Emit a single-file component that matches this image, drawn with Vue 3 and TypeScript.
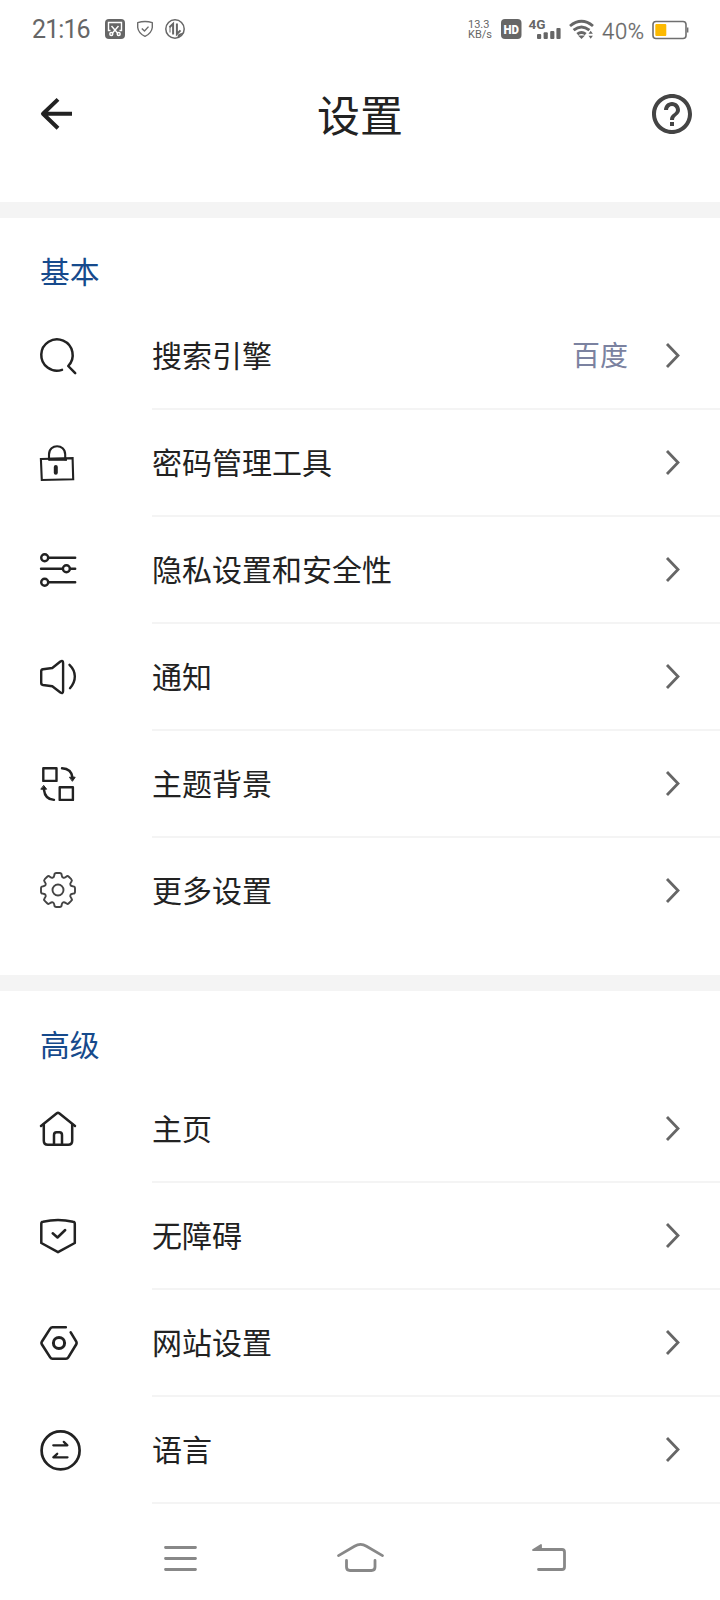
<script setup lang="ts">
type IconName =
  | 'search' | 'lock' | 'sliders' | 'speaker' | 'theme'
  | 'gear' | 'home' | 'shield' | 'hexagon' | 'language'

interface Item {
  icon: IconName
  label: string
  value?: string
}

interface Section {
  title: string
  items: Item[]
}

const sections: Section[] = [
  {
    title: '基本',
    items: [
      { icon: 'search', label: '搜索引擎', value: '百度' },
      { icon: 'lock', label: '密码管理工具' },
      { icon: 'sliders', label: '隐私设置和安全性' },
      { icon: 'speaker', label: '通知' },
      { icon: 'theme', label: '主题背景' },
      { icon: 'gear', label: '更多设置' },
    ],
  },
  {
    title: '高级',
    items: [
      { icon: 'home', label: '主页' },
      { icon: 'shield', label: '无障碍' },
      { icon: 'hexagon', label: '网站设置' },
      { icon: 'language', label: '语言' },
    ],
  },
]

// Outline of an eight-toothed gear around (cx, cy), with softened corners
function gearOutline(cx: number, cy: number): string {
  const profile: [number, number][] = [
    [-3.9, 12.9], [-3.5, 17], [3.5, 17], [3.9, 12.9],
  ]
  const points: [number, number][] = []
  for (let tooth = 0; tooth < 8; tooth++) {
    const a = (tooth * Math.PI) / 4
    for (const [u, r] of profile) {
      points.push([
        cx + u * Math.cos(a) + r * Math.sin(a),
        cy + u * Math.sin(a) - r * Math.cos(a),
      ])
    }
  }
  const toward = (from: [number, number], to: [number, number], distance: number) => {
    const length = Math.hypot(to[0] - from[0], to[1] - from[1])
    const t = Math.min(0.5, distance / length)
    return `${(from[0] + (to[0] - from[0]) * t).toFixed(2)} ${(from[1] + (to[1] - from[1]) * t).toFixed(2)}`
  }
  const n = points.length
  return points
    .map((p, i) => {
      const start = toward(p, points[(i + n - 1) % n], 1.8)
      const end = toward(p, points[(i + 1) % n], 1.8)
      return `${i ? 'L' : 'M'}${start}Q${p[0].toFixed(2)} ${p[1].toFixed(2)} ${end}`
    })
    .join('') + 'Z'
}

const gearPath = gearOutline(18, 22)
</script>

<template>
  <div class="screen">
    <div class="status">
      <span class="clock">21:16</span>
      <svg class="tray" width="84" height="24" viewBox="103 17 84 24">
        <rect x="105" y="19" width="20" height="20" rx="4" fill="#666" />
        <g fill="none" stroke="#fff" stroke-width="1.4">
          <path d="M110.500 30.500h-2v-8h13v8h-2" />
          <path d="M111.500 26l6 7M118.500 26l-6 7" />
          <circle cx="111.300" cy="34" r="1.500" />
          <circle cx="118.700" cy="34" r="1.500" />
        </g>
        <g fill="none" stroke="#6c6c6c" stroke-width="1.4" stroke-linejoin="round">
          <path d="M137.700 22.700Q145 20.200 152.300 22.700V27.500Q151.600 33.200 145 36.400Q138.400 33.200 137.700 27.500Z" />
          <path d="M141.800 28.400l2.700 2.600 4-4.400" />
        </g>
        <circle cx="175" cy="29" r="9.200" fill="none" stroke="#666" stroke-width="1.500" />
        <path d="M169.500 27.200l3.600-3.400V34.500M176.900 23.500V34l3.600-3.600" fill="none" stroke="#666" stroke-width="2" />
        <path d="M170 27v5.500" stroke="#666" stroke-width="1" />
        <path d="M184 32.500L178 38Q176.500 34.500 180 33.500Z" fill="#666" />
      </svg>
      <span class="spacer"></span>
      <span class="speed"><span>13.3</span><span>KB/s</span></span>
      <svg class="radio" width="98" height="24" viewBox="499 17 98 24">
        <rect x="501" y="19" width="20.500" height="20" rx="4" fill="#666" />
        <text x="511.200" y="33.500" text-anchor="middle" class="badge" textLength="15.500" lengthAdjust="spacingAndGlyphs">HD</text>
        <text x="528.500" y="28.800" class="net" textLength="17" lengthAdjust="spacingAndGlyphs">4G</text>
        <g fill="#666">
          <rect x="537" y="34" width="4.200" height="5" rx="1" />
          <rect x="543.600" y="32.300" width="4.200" height="6.700" rx="1" />
          <rect x="550.200" y="31" width="4.200" height="8" rx="1" />
          <rect x="556.400" y="28" width="4.200" height="11" rx="1" />
        </g>
        <g fill="none" stroke="#666" stroke-width="2.900">
          <path d="M570 26q11.500-9.400 23 0" />
          <path d="M573.600 30.200q7.900-6.600 15.800 0" />
          <path d="M577.300 34.200q4.200-3.600 8.400 0" />
        </g>
        <path d="M578 35.500h7l-3.500 3.500zM588.500 33.800l2.200-3 2.200 3zM588.500 35.800l2.200 3 2.200-3z" fill="#666" />
      </svg>
      <span class="percent">40%</span>
      <svg class="battery" width="38" height="20" viewBox="651 20 38 20">
        <rect x="653" y="21.500" width="33" height="17" rx="3" fill="none" stroke="#6f6f6f" stroke-width="1.600" />
        <rect x="655.300" y="24" width="11" height="12" rx="1" fill="#fcb900" />
        <path d="M687.700 27.500v5" stroke="#6f6f6f" stroke-width="1.400" />
      </svg>
    </div>

    <header class="header">
      <svg width="48" height="48" viewBox="0 0 48 48">
        <path d="M28 9.400L13 23.800L28 38.200M13.500 23.800H42" fill="none" stroke="#222" stroke-width="4" stroke-linejoin="round" />
      </svg>
      <h1 class="title">设置</h1>
      <svg width="48" height="48" viewBox="0 0 24 24" fill="#444">
        <path d="M11 18h2v-2h-2v2zm1-16C6.480 2 2 6.480 2 12s4.480 10 10 10 10-4.480 10-10S17.520 2 12 2zm0 18c-4.410 0-8-3.590-8-8s3.590-8 8-8 8 3.590 8 8-3.590 8-8 8zm0-14c-2.210 0-4 1.790-4 4h2c0-1.100.9-2 2-2s2 .9 2 2c0 2-3 1.750-3 5h2c0-2.250 3-2.500 3-5 0-2.210-1.790-4-4-4z" />
      </svg>
    </header>

    <section v-for="section in sections" :key="section.title" class="section">
      <h2 class="section-title">{{ section.title }}</h2>
      <ul class="list">
        <li v-for="item in section.items" :key="item.label" class="row">
          <svg class="icon" width="45" height="45" viewBox="0 0 45 45">
            <path v-if="item.icon === 'search'" d="M22 36.900A15.700 15.700 0 1 1 28.200 33L35.200 40.200" />
            <g v-else-if="item.icon === 'lock'">
              <path d="M.9 19L32.600 18.200L33.200 39.300L1.800 40Z" stroke-width="2.100" stroke-linejoin="miter" />
              <path d="M9 19.500V14.500C9 3.400 25.200 3.400 25.200 14.500V19.500" stroke-width="2.100" />
              <path d="M8.500 19.300H27" stroke-width="3" stroke-linecap="butt" />
              <path d="M15.800 27v5.800" stroke-width="4" />
            </g>
            <g v-else-if="item.icon === 'sliders'" stroke-width="2.400">
              <path d="M8.500 10.700H35.200M1 21.800H22.500M30 21.800H35.200M8.500 35.300H35.200" />
              <circle cx="4.700" cy="10.700" r="3.500" />
              <circle cx="26.400" cy="21.800" r="3.500" />
              <circle cx="4.700" cy="35.300" r="3.500" />
            </g>
            <g v-else-if="item.icon === 'speaker'" stroke-width="2.400">
              <path d="M3 15.200L12.300 14L20.400 7.500Q23.100 6 23.100 9V37Q23.100 40 20.400 38.500L12.300 32.200L3 31Q1.200 30.700 1.200 29V17.200Q1.200 15.400 3 15.200Z" />
              <path d="M29.500 10.800C36.500 17.500 36.500 27 30 34.200" />
            </g>
            <g v-else-if="item.icon === 'theme'" stroke-width="2.400">
              <rect x="3.300" y="7.300" width="13.200" height="12.600" />
              <rect x="19.700" y="26.300" width="13.200" height="12.600" />
              <path d="M22 7.200Q31.500 7.700 32.500 16.500M14 38.900Q5 38.500 3.900 28.500" />
              <path d="M29.800 16.200H35.200L32.600 20ZM1.200 28.200H6.600L3.900 24.700Z" fill="#222" stroke-width="1" />
            </g>
            <g v-else-if="item.icon === 'gear'" class="soft">
              <path :d="gearPath" />
              <circle cx="18" cy="22" r="5.500" />
            </g>
            <g v-else-if="item.icon === 'home'" stroke-width="2.500">
              <path d="M1 20L16.800 7.300Q18 6.400 19.200 7.300L35 20" />
              <path d="M3.800 18.500V34.700Q3.800 38.700 7.800 38.700H28.200Q32.200 38.700 32.200 34.700V18.500" />
              <path d="M14 38.500V29Q14 26.200 16.500 26.200H19.500Q22 26.200 22 29V38.500" />
            </g>
            <g v-else-if="item.icon === 'shield'" stroke-width="2.500">
              <path d="M1.300 10.500Q1.300 9 3 8.700Q18 5.200 33 8.700Q34.800 9 34.800 10.500V30L18 39.200L1.300 30Z" />
              <path d="M12.700 20.300L17.500 24.500L25.200 17" />
            </g>
            <g v-else-if="item.icon === 'hexagon'" stroke-width="2.600">
              <path d="M25.800 7.300H12.500Q11 7.300 10.200 8.600L1.800 21.700Q1 23 1.800 24.300L10.200 37.400Q11 38.800 12.500 38.800H26Q27.500 38.800 28.300 37.400L36.300 24.300Q37 23 36.300 21.700L30.700 12.300" />
              <circle cx="19" cy="23" r="5.600" stroke-width="3" />
            </g>
            <g v-else stroke-width="2.700">
              <circle cx="20.600" cy="23.400" r="19" />
              <path d="M13.300 18.300H27.400L23.800 14.900M27.500 30.300H13.300L17.200 26.800" stroke-width="2.300" />
            </g>
          </svg>
          <div class="body">
            <span class="label">{{ item.label }}</span>
            <span v-if="item.value" class="value">{{ item.value }}</span>
            <svg class="chevron" width="16" height="27" viewBox="0 0 16 27">
              <path d="M2 2L13 13.500L2 25" fill="none" stroke="#666" stroke-width="2.800" />
            </svg>
          </div>
        </li>
      </ul>
    </section>

    <nav class="nav">
      <svg width="60" height="40" viewBox="150 1539 60 40">
        <path d="M165.500 1547.500H195.500M165.500 1558.500H195.500M165.500 1569.500H195.500" />
      </svg>
      <svg width="60" height="40" viewBox="334 1539 60 40">
        <path d="M338.500 1555.600L354.500 1546.200Q360.500 1542.600 366.500 1546.200L382.500 1555.600" />
        <path d="M346.500 1560.500V1567Q346.500 1570.500 350 1570.500H371.500Q375 1570.500 375 1567V1560.500" />
      </svg>
      <svg width="60" height="40" viewBox="518 1539 60 40">
        <path d="M538.500 1569.500H562Q564.500 1569.500 564.500 1567V1552Q564.500 1549.500 562 1549.500H536" />
        <path class="arrowhead" d="M533 1550L541 1545V1550Z" />
      </svg>
    </nav>
  </div>
</template>

<style>
body {
  margin: 0;
  background: #fff;
}
</style>

<style scoped>
.screen {
  width: 720px;
  height: 1600px;
  overflow: hidden;
  display: flex;
  flex-direction: column;
  background: #fff;
  color: #222;
  font-family: "Noto Sans CJK SC", sans-serif;
}

svg {
  display: block;
  flex: none;
}

.status {
  height: 58px;
  box-sizing: border-box;
  padding: 0 31px 0 32px;
  display: flex;
  align-items: center;
  color: #666;
  font-family: Roboto, sans-serif;
}

.clock {
  width: 71px;
  padding-top: 2px;
  font-size: 25px;
  line-height: 30px;
  letter-spacing: -0.9px;
}

.spacer {
  flex: 1;
}

.speed {
  width: 31px;
  display: flex;
  flex-direction: column;
  font-size: 11px;
  line-height: 10.5px;
  padding-top: 2px;
}

.badge {
  font: 900 12px Roboto, sans-serif;
  fill: #fff;
}

.net {
  font: 700 12.5px Roboto, sans-serif;
  fill: #666;
}

.percent {
  width: 49px;
  padding: 5px 0 0 5px;
  box-sizing: border-box;
  font-size: 22px;
  line-height: 28px;
  font-weight: 300;
  letter-spacing: 0.7px;
  -webkit-text-stroke: 0.3px #666;
}

.battery {
  margin-top: 2px;
  margin-left: 5px;
}

.header {
  height: 144px;
  box-sizing: border-box;
  padding: 32px 24px 0 30px;
  display: flex;
  align-items: flex-start;
  justify-content: space-between;
}

.title {
  margin: -2px 6px 0 0;
  font-size: 43px;
  line-height: 50px;
  font-weight: 400;
}

.section {
  flex: none;
  border-top: 16px solid #f4f4f4;
}

.section + .section {
  margin-top: 32px;
}

.section-title {
  margin: 0;
  height: 85px;
  box-sizing: border-box;
  padding: 31px 0 0 40px;
  font-size: 29.8px;
  line-height: 42px;
  font-weight: 400;
  color: #164a8c;
}

.list {
  margin: 0;
  padding: 0;
  list-style: none;
}

.row {
  display: flex;
  align-items: stretch;
  padding-left: 40px;
}

.icon {
  margin-top: 30px;
  overflow: visible;
  fill: none;
  stroke: #222;
  stroke-width: 2.5;
  stroke-linecap: round;
  stroke-linejoin: round;
}

.soft {
  stroke: #444;
  stroke-width: 1.9;
}

.body {
  flex: 1;
  height: 105px;
  margin-left: 67px;
  padding-right: 39px;
  border-bottom: 2px solid #f4f4f4;
  display: flex;
  align-items: center;
}

.section:nth-of-type(1) .row:last-child .body {
  border-bottom: 0;
}

.label {
  flex: 1;
  font-size: 30px;
  line-height: 44px;
  padding-bottom: 3px;
}

.value {
  margin-right: 37px;
  padding-bottom: 3px;
  font-size: 28px;
  line-height: 40px;
  color: #7b82a0;
}

.nav {
  height: 96px;
  box-sizing: border-box;
  padding: 13px 142px 0 150px;
  display: flex;
  align-items: center;
  justify-content: space-between;
}

.nav path {
  fill: none;
  stroke: #888;
  stroke-width: 2.8;
  stroke-linecap: round;
  stroke-linejoin: round;
}

.nav .arrowhead {
  fill: #888;
  stroke-width: 1.8;
}
</style>
